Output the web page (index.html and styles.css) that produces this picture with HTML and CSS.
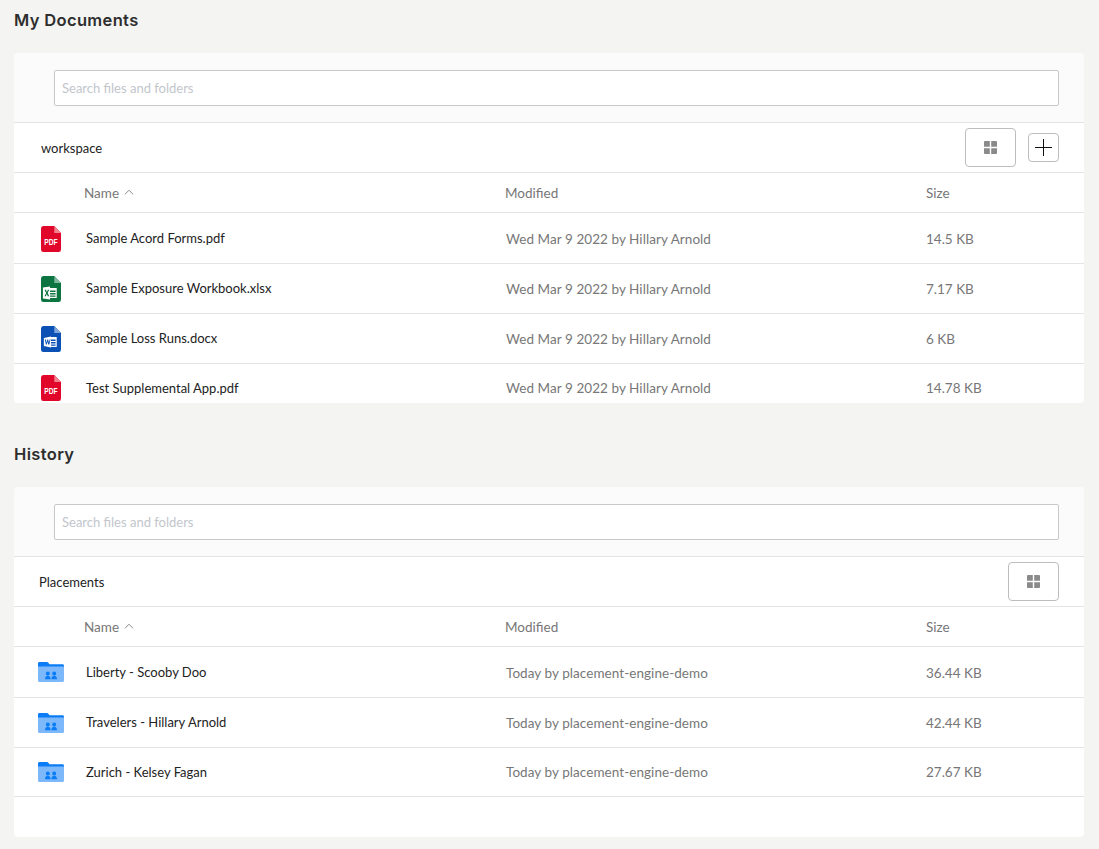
FILE: index.html
```html
<!DOCTYPE html>
<html lang="en">
<head>
<meta charset="utf-8">
<title>Documents</title>
<link rel="stylesheet" href="styles.css">
</head>
<body>
<svg class="defs" width="0" height="0" aria-hidden="true">
  <defs>
    <symbol id="grid" viewBox="0 0 13 13"><path fill="#8a8a8a" d="M1 0h4.800v5.800H0V1a1 1 0 0 1 1-1zM7.200 0H12a1 1 0 0 1 1 1v4.800H7.200zM0 7.200h5.800V13H1a1 1 0 0 1-1-1zM7.200 7.200H13V12a1 1 0 0 1-1 1H7.200z"/></symbol>
    <symbol id="chev" viewBox="0 0 10 6"><path d="M1 5.300 5 1.200l4 4.100" fill="none" stroke="#8a8a8a" stroke-width="1"/></symbol>
    <symbol id="folder" viewBox="0 0 26 20"><path fill="#0a7cf5" d="M1.500 0h7.300c.8 0 1.200.4 1.700 1l1 1.200h13c.9 0 1.500.6 1.500 1.500V8H0V1.500C0 .6.600 0 1.500 0z"/><path fill="#7db8fb" d="M0 4.500h26v14c0 .9-.6 1.500-1.500 1.500h-23C.6 20 0 19.400 0 18.500z"/><path fill="#0a7cf5" d="M9.800 9.500a2 2 0 1 1 0 4 2 2 0 0 1 0-4zM16.200 9.500a2 2 0 1 1 0 4 2 2 0 0 1 0-4zM7 17.300c0-2.300 1-3.600 2.800-3.600s2.800 1.300 2.800 3.600zM13.400 17.300c0-2.300 1-3.600 2.800-3.600S19 15 19 17.300z"/></symbol>
    <symbol id="pdf" viewBox="0 0 21 26"><path fill="#e0072a" d="M2.500 0H14l7 7v16.500a2.500 2.500 0 0 1-2.500 2.500h-16A2.500 2.500 0 0 1 0 23.500v-21A2.500 2.500 0 0 1 2.500 0z"/><path fill="#f0838f" d="M14 0l7 7h-7z"/></symbol>
  </defs>
</svg>

<main class="page">
  <section class="panel-block">
    <h2 class="panel-title">My Documents</h2>
    <div class="card">
      <div class="search-band"><input class="search" type="text" placeholder="Search files and folders"></div>
      <div class="toolbar">
        <span class="crumb crumb-workspace">workspace</span>
        <div class="actions">
          <button class="btn-view" type="button" aria-label="Grid view"><svg width="13" height="13"><use href="#grid"/></svg></button>
          <button class="btn-add" type="button" aria-label="Add"><svg width="17" height="17" viewBox="0 0 17 17"><path d="M8.500 0v17M0 8.500h17" stroke="#111" stroke-width="1" fill="none"/></svg></button>
        </div>
      </div>
      <div class="row head">
        <span class="c-icon"></span>
        <span class="c-name head-name">Name <svg class="chev" width="10" height="6"><use href="#chev"/></svg></span>
        <span class="c-mod">Modified</span>
        <span class="c-size">Size</span>
      </div>
      <div class="row first">
        <span class="c-icon c-file"><svg width="20" height="26" viewBox="0 0 21 26" preserveAspectRatio="none"><use href="#pdf" width="21" height="26"/><text class="pdf-label" x="3.500" y="18.800" textLength="14" lengthAdjust="spacingAndGlyphs">PDF</text></svg></span>
        <span class="c-name">Sample Acord Forms.pdf</span>
        <span class="c-mod">Wed Mar 9 2022 by Hillary Arnold</span>
        <span class="c-size">14.5 KB</span>
      </div>
      <div class="row">
        <span class="c-icon c-file"><svg width="20" height="26" viewBox="0 0 21 26" preserveAspectRatio="none"><path fill="#0b7440" d="M2.500 0H14l7 7v16.500a2.500 2.500 0 0 1-2.500 2.500h-16A2.500 2.500 0 0 1 0 23.500v-21A2.500 2.500 0 0 1 2.500 0z"/><path fill="#7fb89c" d="M14 0l7 7h-7z"/><path fill="#fff" d="M9 12h7.500v10H9v-1.200h6.300v-1.300H9v-1h6.300V17H9v-1h6.300v-1.500H9z"/><path fill="#fff" d="M2 11.500l7.500-1v13l-7.500-1z"/><path fill="#0b7440" d="M3.700 13.700h1.500l1 2.200 1-2.200h1.400L7 17l1.700 3.300H7.100l-1-2.200-1 2.200H3.700L5.400 17z"/></svg></span>
        <span class="c-name">Sample Exposure Workbook.xlsx</span>
        <span class="c-mod">Wed Mar 9 2022 by Hillary Arnold</span>
        <span class="c-size">7.17 KB</span>
      </div>
      <div class="row">
        <span class="c-icon c-file"><svg width="20" height="26" viewBox="0 0 21 26" preserveAspectRatio="none"><path fill="#0b50b4" d="M2.500 0H14l7 7v16.500a2.500 2.500 0 0 1-2.500 2.500h-16A2.500 2.500 0 0 1 0 23.500v-21A2.500 2.500 0 0 1 2.500 0z"/><path fill="#7fa5da" d="M14 0l7 7h-7z"/><path fill="#fff" d="M8 11h8.500v10H8v-1.200h7.300v-1.300H10v-1h5.300V16H10v-1h5.300v-1.500H8z"/><path fill="#fff" d="M3 12l7.500-1.500v11L3 20z"/><path fill="#0b50b4" d="M4 13.500h1.100l.7 3.200.8-3.200h.9l.8 3.200.7-3.200h1l-1.300 5H7.600l-.7-3-.8 3H5.200z"/></svg></span>
        <span class="c-name">Sample Loss Runs.docx</span>
        <span class="c-mod">Wed Mar 9 2022 by Hillary Arnold</span>
        <span class="c-size">6 KB</span>
      </div>
      <div class="row last">
        <span class="c-icon c-file"><svg width="20" height="26" viewBox="0 0 21 26" preserveAspectRatio="none"><use href="#pdf" width="21" height="26"/><text class="pdf-label" x="3.500" y="18.800" textLength="14" lengthAdjust="spacingAndGlyphs">PDF</text></svg></span>
        <span class="c-name">Test Supplemental App.pdf</span>
        <span class="c-mod">Wed Mar 9 2022 by Hillary Arnold</span>
        <span class="c-size">14.78 KB</span>
      </div>
    </div>
  </section>

  <section class="panel-block">
    <h2 class="panel-title">History</h2>
    <div class="card">
      <div class="search-band"><input class="search" type="text" placeholder="Search files and folders"></div>
      <div class="toolbar">
        <span class="crumb crumb-placements">Placements</span>
        <div class="actions">
          <button class="btn-view" type="button" aria-label="Grid view"><svg width="13" height="13"><use href="#grid"/></svg></button>
        </div>
      </div>
      <div class="row head">
        <span class="c-icon"></span>
        <span class="c-name head-name">Name <svg class="chev" width="10" height="6"><use href="#chev"/></svg></span>
        <span class="c-mod">Modified</span>
        <span class="c-size">Size</span>
      </div>
      <div class="row first">
        <span class="c-icon"><svg width="26" height="20"><use href="#folder"/></svg></span>
        <span class="c-name">Liberty - Scooby Doo</span>
        <span class="c-mod">Today by placement-engine-demo</span>
        <span class="c-size">36.44 KB</span>
      </div>
      <div class="row">
        <span class="c-icon"><svg width="26" height="20"><use href="#folder"/></svg></span>
        <span class="c-name">Travelers - Hillary Arnold</span>
        <span class="c-mod">Today by placement-engine-demo</span>
        <span class="c-size">42.44 KB</span>
      </div>
      <div class="row last">
        <span class="c-icon"><svg width="26" height="20"><use href="#folder"/></svg></span>
        <span class="c-name">Zurich - Kelsey Fagan</span>
        <span class="c-mod">Today by placement-engine-demo</span>
        <span class="c-size">27.67 KB</span>
      </div>
    </div>
  </section>
</main>
</body>
</html>
```

FILE: styles.css
```css
* { box-sizing: border-box; }
html, body { margin: 0; height: 100%; }
body {
  background: #f4f4f2;
  font-family: Lato, "Liberation Sans", sans-serif;
  font-size: 13.5px;
  color: #222;
  overflow: hidden;
}
.defs { position: absolute; }
.page { padding: 0 15px 0 14px; }
.panel-block { display: flex; flex-direction: column; }
.panel-block + .panel-block { margin-top: 31px; }
.panel-title {
  margin: 0;
  height: 53px;
  padding-top: 10px;
  font-family: Inter, sans-serif;
  font-size: 16.5px;
  line-height: 20px;
  font-weight: 600;
  letter-spacing: .35px;
  color: #2e2e2e;
}
.card {
  height: 350px;
  background: #fff;
  border-radius: 4px;
  overflow: hidden;
}
.search-band {
  height: 70px;
  padding: 17px 25px 0 40px;
  background: #fbfbfb;
  border-bottom: 1px solid #e4e4e4;
}
.search {
  display: block;
  width: 100%;
  height: 36px;
  padding: 0 7px;
  border: 1px solid #c8c8c8;
  border-radius: 2px;
  background: #fff;
  font: inherit;
  font-size: 13px;
  outline: none;
}
.search::placeholder { color: #c2c6cc; opacity: 1; }
.toolbar {
  display: flex;
  align-items: center;
  justify-content: space-between;
  height: 50px;
  padding-right: 25px;
  border-bottom: 1px solid #e4e4e4;
  font-size: 13px;
}
.crumb-workspace { margin-left: 27px; }
.crumb-placements { margin-left: 25px; }
.actions { display: flex; align-items: center; gap: 12px; }
.btn-view, .btn-add {
  display: flex;
  align-items: center;
  justify-content: center;
  padding: 0;
  background: #fff;
  border: 1px solid #bdbdbd;
  border-radius: 4px;
}
.btn-view { width: 51px; height: 39px; }
.btn-add { width: 31px; height: 29px; }
.row {
  display: flex;
  align-items: center;
  height: 50px;
  border-bottom: 1px solid #e4e4e4;
  color: #777;
}
.row.first { height: 51px; }
.row.last { height: 49px; }
.row.head { height: 40px; }
.c-icon { width: 72px; display: flex; padding-left: 27px; flex: none; }
.row .c-icon:has(svg[height="20"]) { padding-left: 24px; }
.c-file { margin-top: 1px; }
.row.last .c-file { margin-top: 0; }
.c-name { width: 420px; flex: none; font-size: 13px; color: #222; }
.c-mod { width: 420px; flex: none; letter-spacing: .06px; }
.row:not(.head):not(.last) .c-mod,
.row:not(.head):not(.last) .c-size { padding-top: 1px; }
.row:not(.head):not(.first):not(.last) .c-name { padding-bottom: 1px; }
.c-size { flex: 1; }
.head-name {
  display: flex;
  align-items: center;
  gap: 5px;
  margin-left: -2px;
  margin-right: 1px;
  font-size: 13.5px;
  color: #777;
}
.head .c-mod { width: 421px; letter-spacing: 0; }
.chev { margin-top: -1px; }
.pdf-label {
  font-family: "Liberation Sans", sans-serif;
  font-size: 9px;
  font-weight: 700;
  fill: #fff;
}
```
